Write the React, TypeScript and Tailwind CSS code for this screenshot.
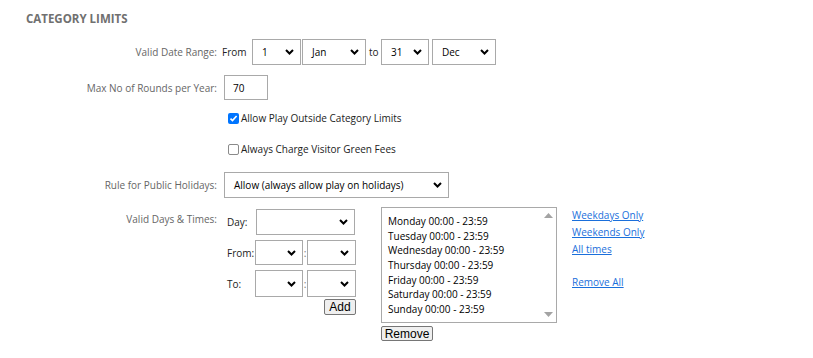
import React from "react";

const days = [
  "Monday 00:00 - 23:59",
  "Tuesday 00:00 - 23:59",
  "Wednesday 00:00 - 23:59",
  "Thursday 00:00 - 23:59",
  "Friday 00:00 - 23:59",
  "Saturday 00:00 - 23:59",
  "Sunday 00:00 - 23:59",
];

function Chevron() {
  return (
    <svg width="9" height="6" viewBox="0 0 9 6" className="shrink-0">
      <path d="M1 1l3.5 3.5L8 1" stroke="#000" strokeWidth="2" fill="none" />
    </svg>
  );
}

function Select({ value = "", className = "" }: { value?: string; className?: string }) {
  return (
    <div
      className={`flex items-center justify-between shrink-0 border border-[#a9a9a9] bg-white pl-[9px] pr-[6px] text-black ${className}`}
    >
      <span>{value}</span>
      <Chevron />
    </div>
  );
}

function Checkbox({ checked }: { checked?: boolean }) {
  return checked ? (
    <span className="flex h-[11px] w-[11px] items-center justify-center rounded-[2px] bg-[#0075ff]">
      <svg width="9" height="9" viewBox="0 0 9 9">
        <path d="M1.5 4.6l2 2L7.6 2" stroke="#fff" strokeWidth="1.6" fill="none" />
      </svg>
    </span>
  ) : (
    <span className="h-[11px] w-[11px] rounded-[2px] border border-[#8a8a8a] bg-white" />
  );
}

function Label({ children, className = "" }: { children: React.ReactNode; className?: string }) {
  return <div className={`w-[218px] shrink-0 pr-[1px] text-right text-[#666] ${className}`}>{children}</div>;
}

function Button({ children, className = "" }: { children: React.ReactNode; className?: string }) {
  return (
    <button
      className={`flex items-center justify-center rounded-[2px] border border-[#767676] bg-[#efefef] font-['Liberation_Sans',Arial,sans-serif] text-[12px] leading-none text-black ${className}`}
    >
      {children}
    </button>
  );
}

export default function App() {
  return (
    <div className="h-[358px] w-[813px] bg-white font-['Open_Sans',sans-serif] text-[10px] leading-[14px]">
      <div className="pl-[26px] pt-[11px] text-[11.5px] font-bold leading-[16px] text-[#707070]">CATEGORY LIMITS</div>

      {/* date range */}
      <div className="mt-[12px] flex items-center">
        <Label>Valid Date Range:</Label>
        <div className="ml-[4px] flex items-center text-[#222]">
          <span className="w-[30px]">From</span>
          <Select value="1" className="h-[26px] w-[49px]" />
          <Select value="Jan" className="ml-[1px] h-[26px] w-[64px]" />
          <span className="ml-[3px] w-[12px]">to</span>
          <Select value="31" className="h-[26px] w-[48px]" />
          <Select value="Dec" className="ml-[3px] h-[26px] w-[64px]" />
        </div>
      </div>

      {/* max rounds */}
      <div className="mt-[10px] flex items-center">
        <Label>Max No of Rounds per Year:</Label>
        <div className="ml-[6px] flex h-[25px] w-[44px] items-center border border-[#a9a9a9] pl-[8px] text-black">70</div>
      </div>

      {/* checkboxes */}
      <div className="mt-[11px] flex items-center">
        <div className="w-[228px] shrink-0" />
        <Checkbox checked />
        <span className="ml-[2px] text-[#222]">Allow Play Outside Category Limits</span>
      </div>
      <div className="mt-[17px] flex items-center">
        <div className="w-[228px] shrink-0" />
        <Checkbox />
        <span className="ml-[2px] text-[#222]">Always Charge Visitor Green Fees</span>
      </div>

      {/* holidays */}
      <div className="mt-[16px] flex items-center">
        <Label>Rule for Public Holidays:</Label>
        <Select value="Allow (always allow play on holidays)" className="ml-[6px] h-[26px] w-[225px]" />
      </div>

      {/* days & times */}
      <div className="mt-[9px] flex items-start">
        <Label className="pt-[5px]">Valid Days &amp; Times:</Label>
        <div className="ml-[4px] flex w-[134px] shrink-0 flex-col text-[#222]">
          <div className="mt-[2px] flex items-center">
            <span className="ml-[5px] w-[29px]">Day:</span>
            <Select className="h-[26px] w-[99px]" />
          </div>
          <div className="mt-[5px] flex items-center">
            <span className="ml-[5px] w-[29px]">From:</span>
            <Select className="h-[25px] w-[48px]" />
            <span className="w-[4px] text-center text-[#777]">:</span>
            <Select className="h-[25px] w-[49px]" />
          </div>
          <div className="mt-[5px] flex items-center">
            <span className="ml-[5px] w-[29px]">To:</span>
            <Select className="h-[27px] w-[48px]" />
            <span className="w-[4px] text-center text-[#777]">:</span>
            <Select className="h-[27px] w-[49px]" />
          </div>
          <Button className="mt-[2px] h-[16px] w-[32px] self-end">Add</Button>
        </div>

        <div className="ml-[25px] flex flex-col">
          <div className="flex h-[116px] w-[176px] border border-[#a9a9a9] bg-white">
            <div className="flex-1 pl-[6px] pt-[6px] leading-[14.67px] text-black">
              {days.map((d) => (
                <div key={d}>{d}</div>
              ))}
            </div>
            <div className="flex w-[15px] flex-col items-center justify-between py-[5px] pr-[1px]">
              <svg width="9" height="5" viewBox="0 0 9 5">
                <path d="M0 5L4.5 0 9 5z" fill="#a3a3a3" />
              </svg>
              <svg width="9" height="5" viewBox="0 0 9 5">
                <path d="M0 0h9L4.5 5z" fill="#a3a3a3" />
              </svg>
            </div>
          </div>
          <Button className="mt-[3px] h-[15px] w-[52px]">Remove</Button>
        </div>

        <div className="ml-[15px] flex flex-col leading-[17px] text-[#1a6fdb]">
          <a href="#" className="underline">Weekdays Only</a>
          <a href="#" className="underline">Weekends Only</a>
          <a href="#" className="underline">All times</a>
          <a href="#" className="mt-[16px] underline">Remove All</a>
        </div>
      </div>
    </div>
  );
}
